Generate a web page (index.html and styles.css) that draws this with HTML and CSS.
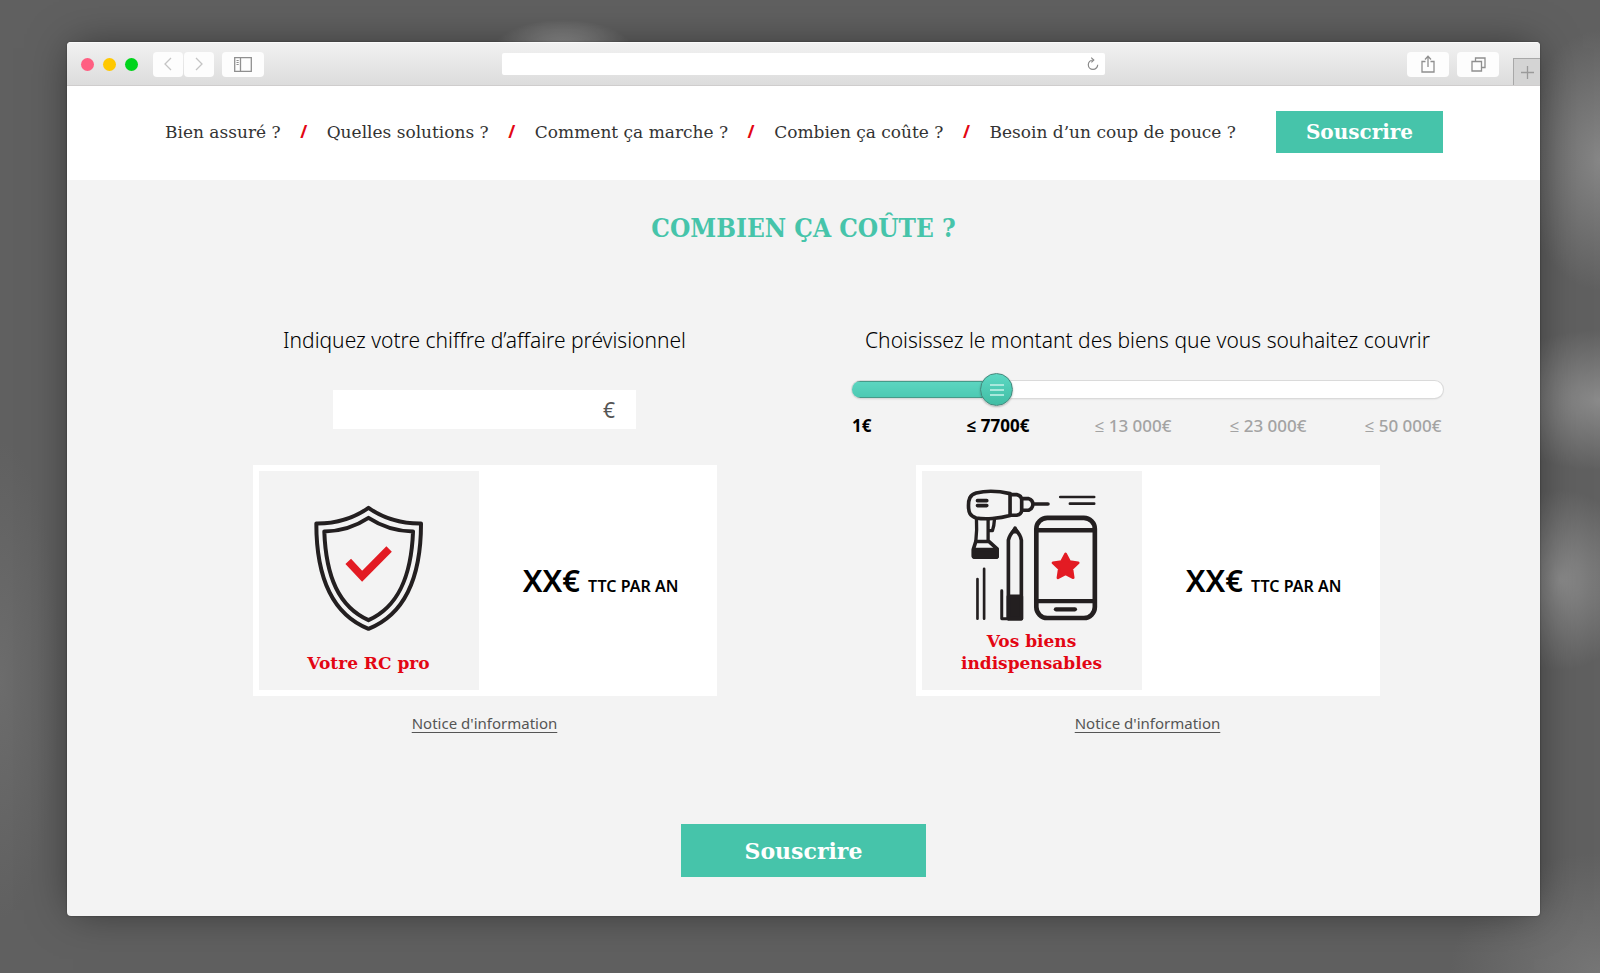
FILE: index.html
```html
<!DOCTYPE html>
<html lang="fr">
<head>
    <meta charset="UTF-8">
    <meta name="viewport" content="width=device-width, initial-scale=1.0">
    <title>Combien ça coûte ?</title>
    <link rel="stylesheet" href="styles.css">
</head>
<body>
    <div class="window">
        <div class="toolbar">
            <div class="toolbar-side">
                <div class="dots">
                    <span class="dot dot-red"></span>
                    <span class="dot dot-yellow"></span>
                    <span class="dot dot-green"></span>
                </div>
                <div class="history">
                    <button type="button" class="tool tool-small" aria-label="Précédent">
                        <svg width="10" height="16" viewBox="0 0 10 16"><path d="M8 2 L2 8 L8 14" fill="none" stroke="#c4c4c4" stroke-width="1.3"/></svg>
                    </button>
                    <button type="button" class="tool tool-small" aria-label="Suivant">
                        <svg width="10" height="16" viewBox="0 0 10 16"><path d="M2 2 L8 8 L2 14" fill="none" stroke="#c4c4c4" stroke-width="1.3"/></svg>
                    </button>
                </div>
                <button type="button" class="tool" aria-label="Barre latérale">
                    <svg width="18" height="15" viewBox="0 0 18 15" fill="none" stroke="#8f8f8f"><path d="M.7 .7 H17.3 V14.3 H.7 Z M6.5 .7 V14.3" stroke-width="1.3"/><path d="M2.5 3.5 H4.7 M2.5 5.5 H4.7 M2.5 7.5 H4.7"/></svg>
                </button>
            </div>
            <div class="address">
                <input type="text" class="address-input" aria-label="Adresse">
                <button type="button" class="reload" aria-label="Recharger">
                    <svg width="12" height="14" viewBox="0 0 12 14" fill="none" stroke="#8a8a8a" stroke-width="1.2"><path d="M6 3 A4.7 4.7 0 1 0 10.7 7.7"/><path d="M4.2 .6 L6.8 3 L4.4 5.4"/></svg>
                </button>
            </div>
            <div class="toolbar-side toolbar-right">
                <button type="button" class="tool" aria-label="Partager">
                    <svg width="14" height="18" viewBox="0 0 14 18" fill="none" stroke="#8f8f8f" stroke-width="1.3"><path d="M4.5 6.5 H1 V17 H13 V6.5 H9.5"/><path d="M7 12 V1.5 M4 4.5 L7 1.3 L10 4.5"/></svg>
                </button>
                <button type="button" class="tool" aria-label="Onglets">
                    <svg width="15" height="15" viewBox="0 0 15 15" fill="none" stroke="#8f8f8f" stroke-width="1.3"><path d="M1 4.5 H10.5 V14 H1 Z"/><path d="M4.5 4.5 V1 H14 V10.5 H10.5"/></svg>
                </button>
                <button type="button" class="new-tab" aria-label="Nouvel onglet">
                    <svg width="13" height="13" viewBox="0 0 13 13"><path d="M6.5 0 V13 M0 6.5 H13" stroke="#9a9a9a" stroke-width="1.3"/></svg>
                </button>
            </div>
        </div>

        <header class="header">
            <nav class="menu">
                <a href="#">Bien assuré ?</a>
                <span class="slash">/</span>
                <a href="#">Quelles solutions ?</a>
                <span class="slash">/</span>
                <a href="#">Comment ça marche ?</a>
                <span class="slash">/</span>
                <a href="#">Combien ça coûte ?</a>
                <span class="slash">/</span>
                <a href="#">Besoin d’un coup de pouce ?</a>
            </nav>
            <button type="button" class="btn">Souscrire</button>
        </header>

        <main class="main">
            <h1 class="title">COMBIEN ÇA COÛTE ?</h1>

            <div class="offers">
                <section class="offer">
                    <label class="question" for="revenue">Indiquez votre chiffre d’affaire prévisionnel</label>
                    <div class="control">
                        <div class="amount">
                            <input type="text" id="revenue" class="amount-input" inputmode="numeric">
                            <span class="amount-unit">€</span>
                        </div>
                    </div>
                    <div class="card">
                        <div class="tile tile-single">
                            <svg class="icon" width="113" height="130" viewBox="215 580 340 390" fill="none" stroke="#231f20" stroke-width="12" stroke-linejoin="round">
                                <path d="M385 594 Q453 642 543 641 C543 807 492 915 385 958 C278 915 228 807 228 641 Q317 642 385 594 Z"/>
                                <path d="M385 624 Q446 664 519 665 C514 802 474 892 385 932 C296 892 257 802 252 665 Q325 664 385 624 Z"/>
                                <path d="M324 755 L366 800 L447 718" stroke="#e31b23" stroke-width="23" stroke-linejoin="miter"/>
                            </svg>
                            <h2 class="tile-name">Votre RC pro</h2>
                        </div>
                        <p class="price"><strong>XX€</strong> TTC PAR AN</p>
                    </div>
                    <a href="#" class="notice">Notice d'information</a>
                </section>

                <section class="offer">
                    <label class="question" for="goods">Choisissez le montant des biens que vous souhaitez couvrir</label>
                    <div class="control">
                        <input type="range" id="goods" class="slider" min="0" max="100" value="23">
                        <div class="steps">
                            <span class="step step-on">1€</span>
                            <span class="step step-on">≤ 7700€</span>
                            <span class="step">≤ 13 000€</span>
                            <span class="step">≤ 23 000€</span>
                            <span class="step">≤ 50 000€</span>
                        </div>
                    </div>
                    <div class="card">
                        <div class="tile">
                            <svg class="icon" width="135" height="133" viewBox="190 115 405 400" fill="none" stroke="#231f20" stroke-width="11" stroke-linecap="round" stroke-linejoin="round">
                                <!-- drill -->
                                <path d="M328 132 C290 123 250 124 226 130 C206 136 203 150 203 168 C203 190 208 199 226 205 C252 210 296 207 328 198 Z"/>
                                <path d="M328 135 H348 Q362 138 363 150 V182 Q362 194 348 197 H328 M365 147 H384 Q396 151 397 163 Q396 178 384 182 H365 M398 163 H442"/>
                                <path d="M230 153 H258 M230 168 H258"/>
                                <path d="M227 208 Q229 240 225 276 M262 208 V274 M281 210 Q280 230 275 243 H264" stroke-width="10"/>
                                <path d="M225 276 H265 L289 298 V320 Q289 323 285 323 H222 Q218 323 218 319 V298 Z"/>
                                <path d="M218 300 H289 V322 H218 Z" fill="#231f20"/>
                                <!-- pencil -->
                                <path d="M323 508 V272 Q326 256 343 238 Q360 256 362 272 V508 Z"/>
                                <path d="M338 246 L343 236 L348 246 Z M323 441 H362 V508 H323 Z" fill="#231f20"/>
                                <path d="M303 424 V508 H323" stroke-width="9"/>
                                <path d="M230 389 V508 M250 358 V508 M479 142 H581 M508 162 H581" stroke-width="8"/>
                                <!-- phone -->
                                <rect x="407" y="205" width="176" height="301" rx="33" stroke-width="14"/>
                                <path d="M410 242 H580 M410 455 H580" stroke-width="13"/>
                                <path d="M466 480 H523" stroke-width="13"/>
                                <path d="M495 313 L507 336 L533 340 L514 358 L518 385 L495 373 L472 385 L476 358 L457 340 L483 336 Z" fill="#e31b23" stroke="#e31b23" stroke-width="8"/>
                            </svg>
                            <h2 class="tile-name">Vos biens indispensables</h2>
                        </div>
                        <p class="price"><strong>XX€</strong> TTC PAR AN</p>
                    </div>
                    <a href="#" class="notice">Notice d'information</a>
                </section>
            </div>

            <button type="button" class="btn btn-large">Souscrire</button>
        </main>
    </div>
</body>
</html>
```
FILE: styles.css
```css
* {
    box-sizing: border-box;
}

body {
    margin: 0;
    padding: 42px 60px 57px 67px;
    min-height: 100vh;
    font-family: "Noto Sans", "Open Sans", sans-serif;
    color: #000;
    background:
        radial-gradient(ellipse 70px 30px at 563px 50px, #a0a0a0, transparent),
        radial-gradient(ellipse 80px 130px at 100% 160px, #868686, transparent),
        radial-gradient(ellipse 120px 70px at 100% 400px, #8a8a8a, transparent),
        radial-gradient(ellipse 80px 90px at 1560px 580px, #8a8a8a, transparent),
        radial-gradient(ellipse 60px 240px at 0 680px, #6c6c6c, transparent),
        radial-gradient(ellipse 150px 120px at 100% 100%, #767676, transparent),
        #606060;
}

button, input {
    font-family: inherit;
    border: none;
    padding: 0;
}

button {
    cursor: pointer;
}

.window {
    border-radius: 4px;
    background-color: #f3f3f3;
    box-shadow: 0 0 2px rgba(0, 0, 0, 0.4), 0 0 40px -6px rgba(0, 0, 0, 0.5);
    overflow: hidden;
}

/* Browser bar */
.toolbar {
    display: flex;
    align-items: center;
    height: 44px;
    background: linear-gradient(#f1f1f1, #dcdcdc);
    border-top: 1px solid #fafafa;
    border-bottom: 1px solid #cfcdcd;
}

.toolbar-side {
    flex: 1;
    display: flex;
    align-items: center;
    gap: 8px;
    height: 100%;
    padding-left: 14px;
}

.toolbar-right {
    justify-content: flex-end;
}

.dots {
    display: flex;
    gap: 9px;
    margin-right: 7px;
}

.dot {
    width: 13px;
    height: 13px;
    border-radius: 50%;
}

.dot-red {
    background-color: #ff5f82;
}

.dot-yellow {
    background-color: #ffc800;
}

.dot-green {
    background-color: #00d41c;
}

.history {
    display: flex;
    gap: 1px;
}

.tool {
    display: flex;
    align-items: center;
    justify-content: center;
    width: 42px;
    height: 25px;
    border-radius: 4px;
    background-color: #fdfdfd;
}

.tool-small {
    width: 30px;
}

.new-tab {
    display: flex;
    align-items: center;
    justify-content: center;
    align-self: flex-end;
    width: 27px;
    height: 27px;
    margin-left: 6px;
    background-color: #d4d4d4;
    border-top: 1px solid #a8a8a8;
    border-left: 1px solid #a8a8a8;
}

.address {
    display: flex;
    align-items: center;
    width: 41%;
    height: 22px;
    padding-right: 6px;
    border-radius: 2px;
    background-color: #fff;
}

.address-input {
    flex: 1;
    background: none;
}

.reload {
    display: flex;
    background: none;
}

/* Header */
.header {
    display: flex;
    align-items: center;
    justify-content: space-between;
    gap: 40px;
    padding: 25px 97px 27px 98px;
    background-color: #fff;
}

.menu {
    flex: 1;
    display: flex;
    justify-content: space-between;
    font-family: "DejaVu Serif", serif;
    font-size: 17px;
    line-height: 24px;
    white-space: nowrap;
}

.menu a {
    color: #333;
    text-decoration: none;
}

.slash {
    color: #e30613;
    font-family: "Open Sans", sans-serif;
    font-weight: bold;
}

.btn {
    width: 167px;
    height: 42px;
    font-family: "DejaVu Serif", serif;
    font-size: 20px;
    font-weight: bold;
    color: #fff;
    background-color: #46c4aa;
}

.btn-large {
    display: block;
    width: 245px;
    height: 53px;
    margin: 91px auto 0;
    font-size: 22px;
}

/* Content */
.main {
    padding: 30px 0 39px;
}

.title {
    margin: 0 0 80px;
    font-family: "DejaVu Serif Condensed", "DejaVu Serif", serif;
    font-size: 26px;
    line-height: 36px;
    text-align: center;
    color: #46c4aa;
}

.offers {
    display: grid;
    grid-template-columns: repeat(2, minmax(0, 1fr));
    gap: 72px;
    padding: 0 97px 0 122px;
}

.offer {
    display: flex;
    flex-direction: column;
    align-items: center;
}

.question {
    font-size: 21px;
    line-height: 28px;
    font-weight: 350;
    white-space: nowrap;
}

.control {
    display: flex;
    flex-direction: column;
    align-items: center;
    width: 100%;
    height: 111px;
    padding-top: 18px;
}

.amount {
    display: flex;
    align-items: center;
    width: 303px;
    height: 39px;
    margin-top: 18px;
    padding: 0 21px;
    background-color: #fff;
}

.amount-input {
    flex: 1;
    min-width: 0;
    font-size: 21px;
    background: none;
}

.amount-unit {
    font-size: 21px;
    color: #555;
}

.slider {
    appearance: none;
    width: 100%;
    height: 34px;
    margin: 0;
    background: none;
}

.slider::-webkit-slider-runnable-track {
    height: 17px;
    border-radius: 9px;
    background:
        linear-gradient(#469a89 1px, #5cd5c0 1px, #4dcab3 16px, #469a89 16px) 0 0 / 25% 100% no-repeat,
        #fff;
    box-shadow: 0 0 0 1px #dadada, 0 1px 2px rgba(0, 0, 0, 0.15);
}

.slider::-webkit-slider-thumb {
    appearance: none;
    width: 33px;
    height: 33px;
    margin-top: -8px;
    border: 1px solid #45877b;
    border-radius: 50%;
    background:
        linear-gradient(#a9e8dc, #a9e8dc) center 10px / 14px 2px no-repeat,
        linear-gradient(#a9e8dc, #a9e8dc) center 15px / 14px 2px no-repeat,
        linear-gradient(#a9e8dc, #a9e8dc) center 20px / 14px 2px no-repeat,
        linear-gradient(#5cd8c3, #41bda4);
    box-shadow: 0 1px 2px rgba(0, 0, 0, 0.25);
}

.steps {
    display: flex;
    gap: 55px;
    width: 100%;
    margin-top: 8px;
    font-size: 17px;
    line-height: 24px;
    white-space: nowrap;
}

.step {
    width: 80px;
    text-align: center;
    font-weight: 500;
    color: #a3a3a3;
}

.step:first-child {
    flex: 1;
    text-align: left;
}

.step-on {
    font-weight: 700;
    color: #000;
}

.card {
    display: grid;
    grid-template-columns: 1fr 1fr;
    align-items: center;
    width: 464px;
    height: 231px;
    background-color: #fff;
}

.tile {
    display: flex;
    flex-direction: column;
    align-items: center;
    justify-content: flex-end;
    gap: 9px;
    height: 219px;
    margin: 6px;
    padding: 0 30px 16px;
    background-color: #f3f3f3;
}

.tile-single {
    gap: 19px;
}

.icon {
    flex-shrink: 0;
}

.tile-name {
    margin: 0;
    font-family: "DejaVu Serif", serif;
    font-size: 17px;
    line-height: 22px;
    text-align: center;
    color: #e30613;
}

.price {
    margin: 0;
    padding-top: 4px;
    font-size: 16px;
    line-height: 36px;
    font-weight: 600;
    text-align: center;
}

.price strong {
    margin-right: 4px;
    font-size: 31px;
    font-weight: 600;
}

.notice {
    margin-top: 17px;
    font-size: 15px;
    line-height: 20px;
    color: #555;
    text-underline-offset: 3px;
}
```
